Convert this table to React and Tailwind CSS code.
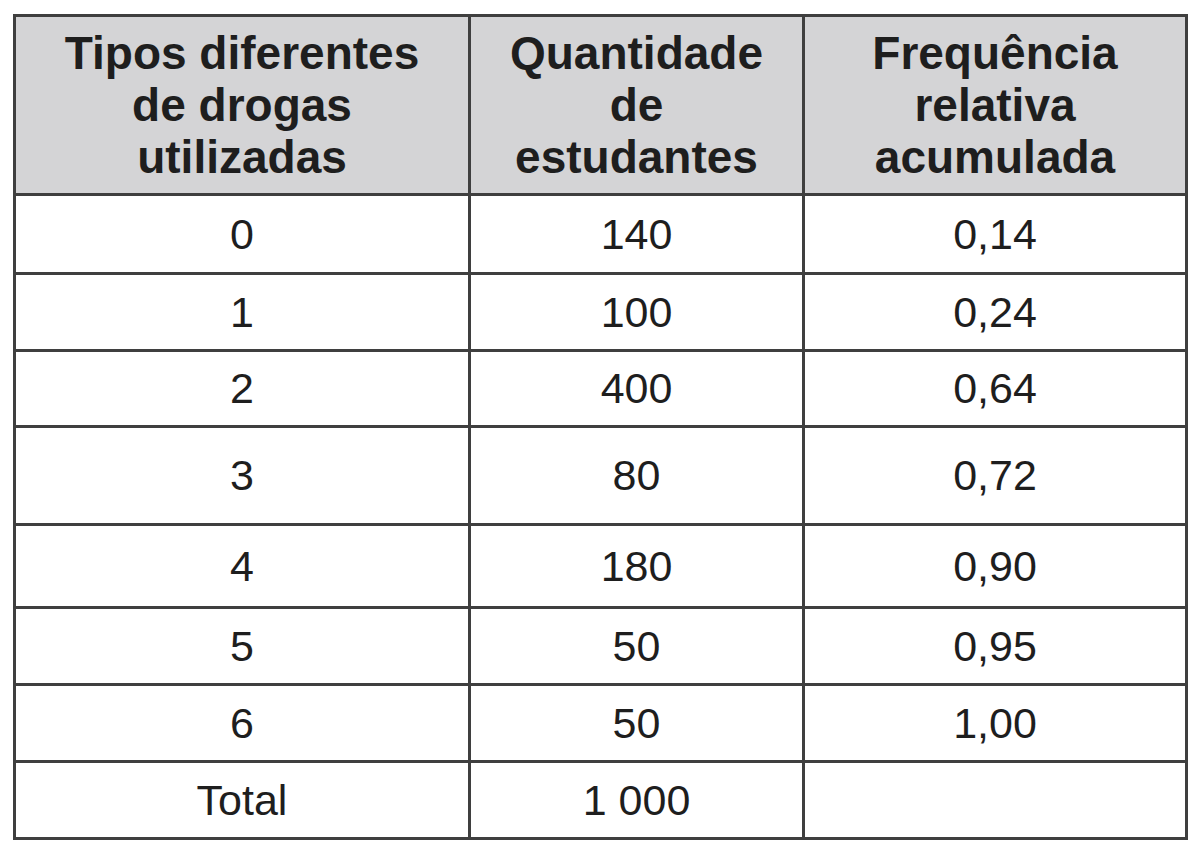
import React from 'react';

const rows = [
  { tipo: '0', qtd: '140', freq: '0,14', h: 'h-[79px]' },
  { tipo: '1', qtd: '100', freq: '0,24', h: 'h-[77px]' },
  { tipo: '2', qtd: '400', freq: '0,64', h: 'h-[76px]' },
  { tipo: '3', qtd: '80', freq: '0,72', h: 'h-[98px]' },
  { tipo: '4', qtd: '180', freq: '0,90', h: 'h-[83px]' },
  { tipo: '5', qtd: '50', freq: '0,95', h: 'h-[77px]' },
  { tipo: '6', qtd: '50', freq: '1,00', h: 'h-[77px]' },
  { tipo: 'Total', qtd: '1 000', freq: '', h: 'h-[77px]' },
];

export default function App() {
  return (
    <div className="min-h-screen bg-white pt-[14px] pl-[13px]" style={{ fontFamily: '"Liberation Sans", Arial, sans-serif' }}>
      <table className="border-collapse table-fixed w-[1172px] text-[#1e1e1e]">
        <colgroup>
          <col className="w-[455px]" />
          <col className="w-[334px]" />
          <col className="w-[383px]" />
        </colgroup>
        <thead>
          <tr className="h-[179px] bg-[#d4d4d6]">
            <th className="border-[3px] border-[#3f3f3f] text-[46px] leading-[52px] font-bold">Tipos diferentes<br />de drogas<br />utilizadas</th>
            <th className="border-[3px] border-[#3f3f3f] text-[46px] leading-[52px] font-bold">Quantidade<br />de<br />estudantes</th>
            <th className="border-[3px] border-[#3f3f3f] text-[46px] leading-[52px] font-bold">Frequência<br />relativa<br />acumulada</th>
          </tr>
        </thead>
        <tbody>
          {rows.map(r => (
            <tr key={r.tipo} className={r.h}>
              <td className="border-[3px] border-[#3f3f3f] text-center text-[43px]">{r.tipo}</td>
              <td className="border-[3px] border-[#3f3f3f] text-center text-[43px]">{r.qtd}</td>
              <td className="border-[3px] border-[#3f3f3f] text-center text-[43px]">{r.freq}</td>
            </tr>
          ))}
        </tbody>
      </table>
    </div>
  );
}
